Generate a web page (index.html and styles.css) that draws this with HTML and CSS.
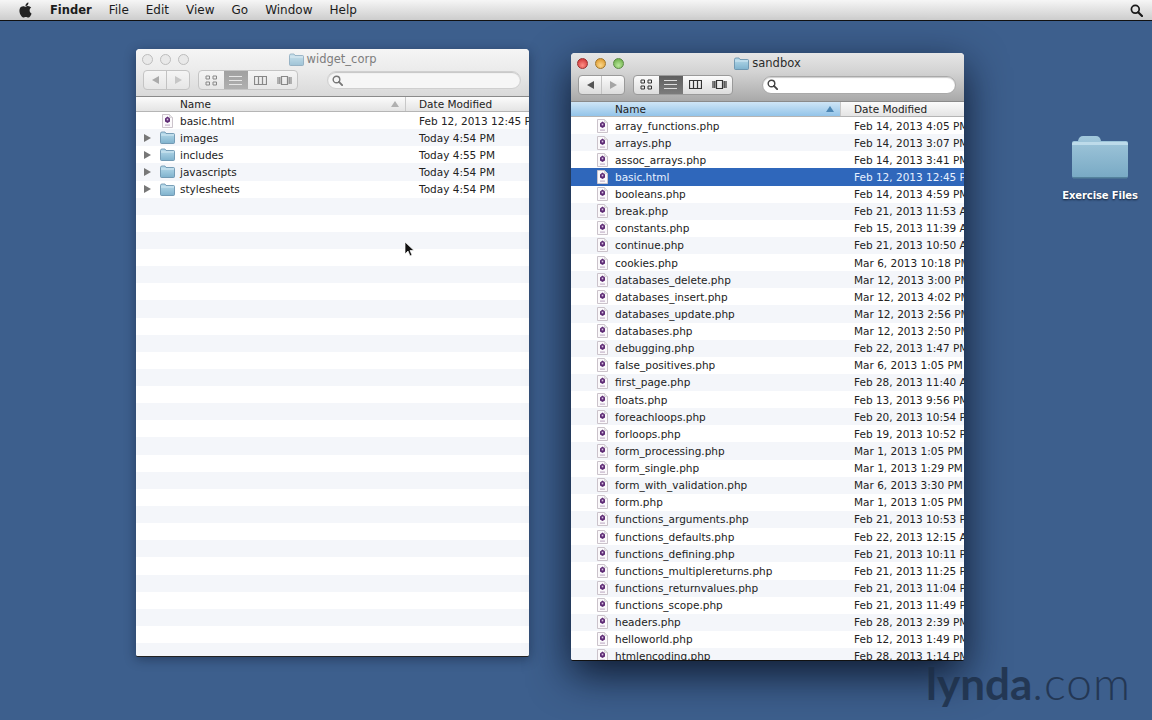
FILE: index.html
```html
<!DOCTYPE html>
<html lang="en">
<head>
<meta charset="UTF-8" />
<title>Finder - sandbox</title>
<link rel="stylesheet" href="styles.css">
</head>
<body>

<svg class="defs" aria-hidden="true">
  <defs>
    <linearGradient id="folderfill" x1="0" y1="0" x2="0" y2="1">
      <stop offset="0" stop-color="#b9dcec" />
      <stop offset="1" stop-color="#7fb2cd" />
    </linearGradient>
    <linearGradient id="bigfolder" x1="0" y1="0" x2="0" y2="1">
      <stop offset="0" stop-color="#a2c8dc" />
      <stop offset="1" stop-color="#78a9c4" />
    </linearGradient>
    <symbol id="doc" viewBox="0 0 11 14">
      <path d="M.5.5h7l3 3v10H.5z" fill="#fbf9fb" stroke="#cbc3cb" />
      <path d="M7.500.5v3h3" fill="#e6e6e6" stroke="#cbc3cb" stroke-width=".6" />
      <path d="M5.500 2.500l2.500 2v3l-2.500 1.500-2.500-1.500v-3z" fill="#5d2a74" />
      <rect x="4.700" y="4.600" width="1.600" height="1.800" fill="#d9c4e2" />
      <rect x="3" y="10.500" width="5" height="1.200" fill="#c3b3c9" />
    </symbol>
    <symbol id="folder" viewBox="0 0 15 13">
      <path d="M.5 2.500q0-1.500 1.500-1.500h3l1 1.500h7.500q1 0 1 1v8q0 1-1 1H1.500q-1 0-1-1z" fill="url(#folderfill)" stroke="#5f8ca8" stroke-width=".8" />
      <path d="M1 4h13" stroke="#dff0f8" stroke-width=".8" />
    </symbol>
    <symbol id="glass" viewBox="0 0 13 13">
      <circle cx="5.300" cy="5.300" r="3.900" fill="none" stroke="currentColor" stroke-width="1.700" />
      <path d="M8.200 8.200l3.800 3.800" stroke="currentColor" stroke-width="2.200" stroke-linecap="round" />
    </symbol>
    <symbol id="icons" viewBox="0 0 13 11">
      <path d="M1 1h3.500v3H1zM8 1h3.500v3H8zM1 7h3.500v3H1zM8 7h3.500v3H8z" fill="none" stroke="currentColor" />
    </symbol>
    <symbol id="lines" viewBox="0 0 13 11">
      <path d="M0 1.500h13M0 5.500h13M0 9.500h13" stroke="currentColor" />
    </symbol>
    <symbol id="cols" viewBox="0 0 13 11">
      <path d="M.5 1.500h12v8H.5zM4.500 1.500v8M8.500 1.500v8" fill="none" stroke="currentColor" stroke-width="1.200" />
    </symbol>
    <symbol id="flow" viewBox="0 0 15 11">
      <path d="M4.500 1.500h6v8h-6zM1 2v7M2.800 2v7M12.200 2v7M14 2v7" fill="none" stroke="currentColor" stroke-width="1.200" />
    </symbol>
  </defs>
</svg>

<div class="menubar">
  <svg class="apple" viewBox="0 0 24 24"><path d="M12.152 6.896c-.948 0-2.415-1.078-3.96-1.04-2.04.027-3.91 1.183-4.961 3.014-2.117 3.675-.546 9.103 1.519 12.09 1.013 1.454 2.208 3.09 3.792 3.039 1.52-.065 2.09-.987 3.935-.987 1.831 0 2.35.987 3.96.948 1.637-.026 2.676-1.48 3.676-2.948 1.156-1.688 1.636-3.325 1.662-3.415-.039-.013-3.182-1.221-3.22-4.857-.026-3.04 2.48-4.494 2.597-4.559-1.429-2.09-3.623-2.324-4.39-2.376-2-.156-3.675 1.09-4.61 1.09zM15.53 3.83c.843-1.012 1.4-2.427 1.245-3.83-1.207.052-2.662.805-3.532 1.818-.78.896-1.454 2.338-1.273 3.714 1.338.104 2.715-.688 3.559-1.701"/></svg>
  <b class="menu-app">Finder</b>
  <span>File</span>
  <span>Edit</span>
  <span>View</span>
  <span>Go</span>
  <span>Window</span>
  <span>Help</span>
  <svg class="spotlight"><use href="#glass" /></svg>
</div>

<!-- widget_corp, inactive -->
<div class="window inactive" id="widget">
  <div class="titlebar">
    <i class="light"></i><i class="light"></i><i class="light"></i>
    <div class="title"><svg class="tfolder"><use href="#folder" /></svg>widget_corp</div>
  </div>
  <div class="toolbar">
    <div class="seg nav">
      <span class="tri-l"></span>
      <span class="tri-r"></span>
    </div>
    <div class="seg views">
      <span><svg class="vicon"><use href="#icons" /></svg></span>
      <span class="on"><svg class="vicon"><use href="#lines" /></svg></span>
      <span><svg class="vicon"><use href="#cols" /></svg></span>
      <span><svg class="vicon wide"><use href="#flow" /></svg></span>
    </div>
    <div class="search"><svg class="sglass"><use href="#glass" /></svg></div>
  </div>
  <div class="header">
    <div class="hname">Name<i class="sort"></i></div>
    <div class="hdate">Date Modified</div>
  </div>
  <div class="list">
    <div class="row"><i></i><svg class="doc"><use href="#doc" /></svg><span>basic.html</span><span>Feb 12, 2013 12:45 PM</span></div>
    <div class="row"><i class="disc"></i><svg class="fold"><use href="#folder" /></svg><span>images</span><span>Today 4:54 PM</span></div>
    <div class="row"><i class="disc"></i><svg class="fold"><use href="#folder" /></svg><span>includes</span><span>Today 4:55 PM</span></div>
    <div class="row"><i class="disc"></i><svg class="fold"><use href="#folder" /></svg><span>javascripts</span><span>Today 4:54 PM</span></div>
    <div class="row"><i class="disc"></i><svg class="fold"><use href="#folder" /></svg><span>stylesheets</span><span>Today 4:54 PM</span></div>
  </div>
</div>

<!-- sandbox, active -->
<div class="window active" id="sandbox">
  <div class="titlebar">
    <i class="light red"></i><i class="light yellow"></i><i class="light green"></i>
    <div class="title"><svg class="tfolder"><use href="#folder" /></svg>sandbox</div>
  </div>
  <div class="toolbar">
    <div class="seg nav">
      <span class="tri-l"></span>
      <span class="tri-r"></span>
    </div>
    <div class="seg views">
      <span><svg class="vicon"><use href="#icons" /></svg></span>
      <span class="on"><svg class="vicon"><use href="#lines" /></svg></span>
      <span><svg class="vicon"><use href="#cols" /></svg></span>
      <span><svg class="vicon wide"><use href="#flow" /></svg></span>
    </div>
    <div class="search"><svg class="sglass"><use href="#glass" /></svg></div>
  </div>
  <div class="header">
    <div class="hname">Name<i class="sort"></i></div>
    <div class="hdate">Date Modified</div>
  </div>
  <div class="list">
    <div class="row"><i></i><svg class="doc"><use href="#doc" /></svg><span>array_functions.php</span><span>Feb 14, 2013 4:05 PM</span></div>
    <div class="row"><i></i><svg class="doc"><use href="#doc" /></svg><span>arrays.php</span><span>Feb 14, 2013 3:07 PM</span></div>
    <div class="row"><i></i><svg class="doc"><use href="#doc" /></svg><span>assoc_arrays.php</span><span>Feb 14, 2013 3:41 PM</span></div>
    <div class="row selected"><i></i><svg class="doc"><use href="#doc" /></svg><span>basic.html</span><span>Feb 12, 2013 12:45 PM</span></div>
    <div class="row"><i></i><svg class="doc"><use href="#doc" /></svg><span>booleans.php</span><span>Feb 14, 2013 4:59 PM</span></div>
    <div class="row"><i></i><svg class="doc"><use href="#doc" /></svg><span>break.php</span><span>Feb 21, 2013 11:53 AM</span></div>
    <div class="row"><i></i><svg class="doc"><use href="#doc" /></svg><span>constants.php</span><span>Feb 15, 2013 11:39 AM</span></div>
    <div class="row"><i></i><svg class="doc"><use href="#doc" /></svg><span>continue.php</span><span>Feb 21, 2013 10:50 AM</span></div>
    <div class="row"><i></i><svg class="doc"><use href="#doc" /></svg><span>cookies.php</span><span>Mar 6, 2013 10:18 PM</span></div>
    <div class="row"><i></i><svg class="doc"><use href="#doc" /></svg><span>databases_delete.php</span><span>Mar 12, 2013 3:00 PM</span></div>
    <div class="row"><i></i><svg class="doc"><use href="#doc" /></svg><span>databases_insert.php</span><span>Mar 12, 2013 4:02 PM</span></div>
    <div class="row"><i></i><svg class="doc"><use href="#doc" /></svg><span>databases_update.php</span><span>Mar 12, 2013 2:56 PM</span></div>
    <div class="row"><i></i><svg class="doc"><use href="#doc" /></svg><span>databases.php</span><span>Mar 12, 2013 2:50 PM</span></div>
    <div class="row"><i></i><svg class="doc"><use href="#doc" /></svg><span>debugging.php</span><span>Feb 22, 2013 1:47 PM</span></div>
    <div class="row"><i></i><svg class="doc"><use href="#doc" /></svg><span>false_positives.php</span><span>Mar 6, 2013 1:05 PM</span></div>
    <div class="row"><i></i><svg class="doc"><use href="#doc" /></svg><span>first_page.php</span><span>Feb 28, 2013 11:40 AM</span></div>
    <div class="row"><i></i><svg class="doc"><use href="#doc" /></svg><span>floats.php</span><span>Feb 13, 2013 9:56 PM</span></div>
    <div class="row"><i></i><svg class="doc"><use href="#doc" /></svg><span>foreachloops.php</span><span>Feb 20, 2013 10:54 PM</span></div>
    <div class="row"><i></i><svg class="doc"><use href="#doc" /></svg><span>forloops.php</span><span>Feb 19, 2013 10:52 PM</span></div>
    <div class="row"><i></i><svg class="doc"><use href="#doc" /></svg><span>form_processing.php</span><span>Mar 1, 2013 1:05 PM</span></div>
    <div class="row"><i></i><svg class="doc"><use href="#doc" /></svg><span>form_single.php</span><span>Mar 1, 2013 1:29 PM</span></div>
    <div class="row"><i></i><svg class="doc"><use href="#doc" /></svg><span>form_with_validation.php</span><span>Mar 6, 2013 3:30 PM</span></div>
    <div class="row"><i></i><svg class="doc"><use href="#doc" /></svg><span>form.php</span><span>Mar 1, 2013 1:05 PM</span></div>
    <div class="row"><i></i><svg class="doc"><use href="#doc" /></svg><span>functions_arguments.php</span><span>Feb 21, 2013 10:53 PM</span></div>
    <div class="row"><i></i><svg class="doc"><use href="#doc" /></svg><span>functions_defaults.php</span><span>Feb 22, 2013 12:15 AM</span></div>
    <div class="row"><i></i><svg class="doc"><use href="#doc" /></svg><span>functions_defining.php</span><span>Feb 21, 2013 10:11 PM</span></div>
    <div class="row"><i></i><svg class="doc"><use href="#doc" /></svg><span>functions_multiplereturns.php</span><span>Feb 21, 2013 11:25 PM</span></div>
    <div class="row"><i></i><svg class="doc"><use href="#doc" /></svg><span>functions_returnvalues.php</span><span>Feb 21, 2013 11:04 PM</span></div>
    <div class="row"><i></i><svg class="doc"><use href="#doc" /></svg><span>functions_scope.php</span><span>Feb 21, 2013 11:49 PM</span></div>
    <div class="row"><i></i><svg class="doc"><use href="#doc" /></svg><span>headers.php</span><span>Feb 28, 2013 2:39 PM</span></div>
    <div class="row"><i></i><svg class="doc"><use href="#doc" /></svg><span>helloworld.php</span><span>Feb 12, 2013 1:49 PM</span></div>
    <div class="row"><i></i><svg class="doc"><use href="#doc" /></svg><span>htmlencoding.php</span><span>Feb 28, 2013 1:14 PM</span></div>
  </div>
</div>

<!-- desktop folder -->
<div class="deskicon">
  <svg class="bigfolder" viewBox="0 0 56 44">
    <path d="M0 8q0-2 2-2h4q1-5 5-5h13q4 0 5 5h25q2 0 2 2v33q0 2-2 2H2q-2 0-2-2z" fill="url(#bigfolder)" />
    <path d="M0 9q0-2 2-2h52q2 0 2 2v1H0z" fill="#bddbea" />
    <path d="M1 42h54v1.500H1z" fill="#54829c" />
  </svg>
  <div class="desklabel">Exercise Files</div>
</div>

<div class="watermark"><b>lynda</b><span>.com</span></div>

<svg class="cursor" viewBox="0 0 10 16"><path d="M1 1v12l3-3 2 5 2-1-2-4.500h4z" fill="#111" stroke="#fff" stroke-width=".7" /></svg>

</body>
</html>
```

FILE: styles.css
```css
html, body {
  margin: 0;
  height: 100%;
  overflow: hidden;
}
body {
  position: relative;
  background: #3d5f8d;
  font-family: "DejaVu Sans", sans-serif;
  color: #222;
}
.defs {
  position: absolute;
  width: 0;
  height: 0;
}

/* Menu bar */
.menubar {
  display: flex;
  align-items: center;
  gap: 17px;
  height: 20px;
  padding-left: 18px;
  background: linear-gradient(#f6f6f6, #cdcdcd);
  border-bottom: 1px solid #111;
  font-size: 12px;
  color: #1c1c1c;
}
.apple {
  width: 15px;
  height: 16px;
  fill: #222;
}
.menu-app {
  font-size: 11.500px;
  font-weight: 700;
}
.spotlight {
  width: 13px;
  height: 13px;
  margin-left: auto;
  margin-right: 9px;
  color: #1a1a1a;
}

/* Finder windows */
.window {
  position: absolute;
  display: flex;
  flex-direction: column;
  width: 393px;
  height: 607px;
  border-radius: 4px 4px 2px 2px;
  overflow: hidden;
  background: #fff;
}
#widget {
  left: 136px;
  top: 49px;
  box-shadow: 0 1px 0 #222, 0 3px 12px rgba(10, 20, 40, 0.45);
}
#sandbox {
  left: 571px;
  top: 53px;
  box-shadow: 0 1px 0 #111, 0 14px 42px rgba(5, 12, 28, 0.85);
}
.titlebar {
  position: relative;
  display: flex;
  align-items: center;
  gap: 7px;
  height: 20px;
  padding-left: 6px;
  font-size: 11.500px;
}
.inactive .titlebar {
  background: linear-gradient(#f5f5f5, #ececec);
  color: #7d7d7d;
}
.active .titlebar {
  background: linear-gradient(#e6e6e6, #d2d2d2);
  color: #2b2b2b;
}
.active .toolbar {
  height: 29px;
  background: linear-gradient(#d2d2d2, #a9a9a9);
}
.inactive .toolbar {
  background: linear-gradient(#ececec, #d9d9d9);
}
.light {
  width: 11px;
  height: 11px;
  border-radius: 50%;
  background: #e9e9e9;
  border: 1px solid #bdbdbd;
  box-sizing: border-box;
}
.red { background: radial-gradient(circle at 50% 70%, #ff8f86, #c9262a); border-color: #97302f; }
.yellow { background: radial-gradient(circle at 50% 70%, #fbd78a, #d88f1e); border-color: #a0762b; }
.green { background: radial-gradient(circle at 50% 70%, #b9e79a, #5fa53c); border-color: #5c8a45; }

.title {
  position: absolute;
  left: 0;
  right: 0;
  display: flex;
  justify-content: center;
  align-items: center;
  gap: 3px;
}
.tfolder {
  width: 15px;
  height: 13px;
}
.inactive .tfolder {
  opacity: 0.7;
}

.toolbar {
  display: flex;
  align-items: center;
  height: 28px;
  padding-left: 7px;
  padding-bottom: 5px;
  box-sizing: border-box;
  border-bottom: 1px solid #8a8a8a;
}
.seg {
  display: flex;
  height: 20px;
  box-sizing: border-box;
  border: 1px solid #9a9a9a;
  border-radius: 4px;
  background: linear-gradient(#fbfbfb, #dcdcdc);
  overflow: hidden;
}
.inactive .seg {
  border-color: #c4c4c4;
  background: linear-gradient(#f5f5f5, #e6e6e6);
}
.nav {
  width: 47px;
  margin-right: 8px;
}
.nav span {
  flex: 1;
  display: flex;
  align-items: center;
  justify-content: center;
}
.nav span + span {
  border-left: 1px solid #c2c2c2;
}
.tri-l::before,
.tri-r::before {
  content: "";
  border-style: solid;
  border-width: 4px 0;
  border-color: transparent;
}
.tri-l::before {
  border-right: 7px solid #555;
}
.tri-r::before {
  border-left: 7px solid #a5a5a5;
}
.inactive .tri-l::before { border-right-color: #aaa; }
.inactive .tri-r::before { border-left-color: #c6c6c6; }

.views {
  width: 100px;
  margin-right: 29px;
}
.views span {
  flex: 1;
  display: flex;
  align-items: center;
  justify-content: center;
  color: #333;
}
.views span.on {
  background: linear-gradient(#5f5f5f, #7c7c7c);
  color: #ddd;
}
.inactive .views span {
  color: #888;
}
.inactive .views span.on {
  background: linear-gradient(#a0a0a0, #b0b0b0);
  color: #e6e6e6;
}
.vicon {
  width: 13px;
  height: 11px;
}
.vicon.wide {
  width: 15px;
}
.search {
  display: flex;
  align-items: center;
  width: 194px;
  height: 18px;
  padding-left: 4px;
  box-sizing: border-box;
  border-radius: 9px;
  background: #fff;
  border: 1px solid #a9a9a9;
  box-shadow: inset 0 1px 1px rgba(0, 0, 0, 0.2);
  color: #444;
}
.inactive .search {
  background: #f6f6f6;
  border-color: #cfcfcf;
  color: #777;
}
.sglass {
  width: 11px;
  height: 11px;
}

/* List */
.header {
  display: flex;
  flex: none;
  height: 15px;
  box-sizing: border-box;
  font-size: 10.500px;
  line-height: 15px;
  background: linear-gradient(#fbfbfb, #e4e4e4);
  border-bottom: 1px solid #b5b5b5;
}
.hname {
  position: relative;
  width: 270px;
  padding-left: 44px;
  box-sizing: border-box;
  border-right: 1px solid #c8c8c8;
}
.active .hname {
  background: linear-gradient(#cfe5f6, #93c4e9);
}
.hdate {
  padding-left: 13px;
}
.sort {
  position: absolute;
  right: 6px;
  top: 4px;
  border-style: solid;
  border-width: 0 4px 6px;
  border-color: transparent transparent #b0b0b0;
}
.active .sort {
  border-bottom-color: #4d87b5;
}
.list {
  flex: 1;
  overflow: hidden;
  background: repeating-linear-gradient(#fff 0 17.130px, #f4f6fa 17.130px 34.260px);
}
.row {
  display: grid;
  grid-template-columns: 22px 22px 239px 1fr;
  align-items: center;
  height: 17.130px;
  font-size: 10.500px;
  white-space: nowrap;
}
.row .doc {
  width: 11px;
  height: 14px;
  margin-left: 4px;
}
.row .fold {
  width: 15px;
  height: 13px;
  margin-left: 2px;
}
.row .disc {
  width: 0;
  height: 0;
  margin-left: 8px;
  border-style: solid;
  border-width: 4px 0 4px 7px;
  border-color: transparent transparent transparent #777;
}
.selected {
  background: #2f67bb;
  color: #e8f1ff;
}

/* Desktop */
.deskicon {
  position: absolute;
  left: 1060px;
  top: 135px;
  width: 80px;
  text-align: center;
}
.bigfolder {
  display: block;
  width: 56px;
  height: 44px;
  margin: 0 auto;
}
.desklabel {
  margin-top: 11px;
  font-size: 10px;
  font-weight: 700;
  letter-spacing: -0.1px;
  color: #fff;
  white-space: nowrap;
  text-shadow: 0 1px 2px #0d1a30;
}
.watermark {
  position: absolute;
  left: 926px;
  top: 658px;
  font-family: Lato, sans-serif;
  font-size: 44px;
  line-height: 50px;
  color: #1d2e46;
  opacity: 0.8;
}
.watermark b {
  font-weight: 700;
}
.watermark span {
  font-size: 46px;
  font-weight: 300;
  letter-spacing: 1px;
}
.cursor {
  position: absolute;
  left: 404px;
  top: 241px;
  width: 10px;
  height: 16px;
}
```
